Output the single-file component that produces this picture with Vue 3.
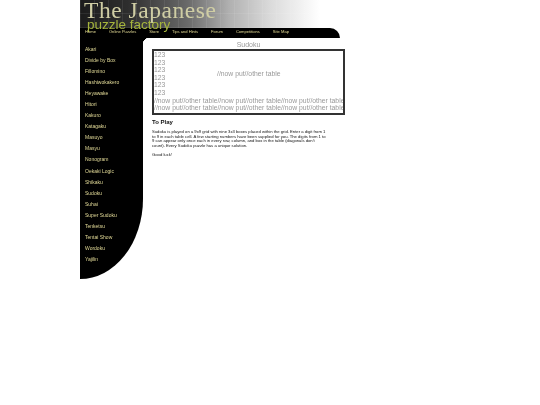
<script setup>
const nav = ['Home', 'Online Puzzles', 'Store', 'Tips and Hints', 'Forum', 'Competitions', 'Site Map']
const puzzles = ['Akari', 'Divide by Box', 'Fillomino', 'Hashiwokakero', 'Heyawake', 'Hitori', 'Kakuro', 'Katagaku', 'Masuyo', 'Masyu', 'Nonogram', 'Oekaki Logic', 'Shikaku', 'Sudoku', 'Suhai', 'Super Sudoku', 'Tenketsu', 'Tentai Show', 'Wordoku', 'Yajilin']
const repeated = '//now put//other table'.repeat(3)
</script>

<template>
  <div class="page">
    <header class="banner">
      <div class="title">The Japanese</div>
      <div class="subtitle">puzzle factory</div>
    </header>
    <nav class="nav">
      <a v-for="n in nav" :key="n" class="nav-item">{{ n }}</a>
    </nav>
    <div class="body">
      <aside class="side">
        <a v-for="p in puzzles" :key="p" class="side-item">{{ p }}</a>
      </aside>
      <main class="main">
        <div class="corner"></div>
        <h1 class="heading">Sudoku</h1>
        <div class="board">
          <div class="top">
            <div class="nums">
              <div v-for="i in 6" :key="i">123</div>
            </div>
            <div class="centre">//now put//other table</div>
          </div>
          <div class="line">{{ repeated }}</div>
          <div class="line">{{ repeated }}</div>
        </div>
        <h2 class="play">To Play</h2>
        <p class="copy">Sudoku is played on a 9x9 grid with nine 3x3 boxes placed within the grid. Enter a digit from 1 to 9 in each table cell. A few starting numbers have been supplied for you. The digits from 1 to 9 can appear only once each in every row, column, and box in the table (diagonals don't count). Every Sudoku puzzle has a unique solution.</p>
        <p class="copy luck">Good luck!</p>
      </main>
    </div>
  </div>
</template>

<style>
html, body { margin: 0; background: #fff; }
</style>

<style scoped>
.page {
  width: 265px;
  margin-left: 80px;
  font-family: "Liberation Sans", Arial, sans-serif;
  filter: blur(0.3px);
}
.banner {
  height: 28px;
  width: 240px;
  background-color: #fff;
  background-image:
    repeating-linear-gradient(90deg, rgba(255,255,255,.07) 0 1px, transparent 1px 14px),
    repeating-linear-gradient(0deg, rgba(255,255,255,.07) 0 1px, transparent 1px 14px),
    linear-gradient(90deg, #1c1c1c 0, #2e2e2e 20%, #6a6a6a 45%, #b0b0b0 62%, #dcdcdc 80%, #fff 100%);
}
.title {
  font-family: "Liberation Serif", serif;
  font-size: 23.5px;
  line-height: 21px;
  letter-spacing: 0.55px;
  color: #cfcda4;
  padding-left: 4px;
}
.subtitle {
  position: relative;
  font-size: 13.5px;
  line-height: 13px;
  color: #a6b53d;
  padding-left: 7px;
  margin-top: -3px;
}
.nav {
  width: 260px;
  height: 10px;
  background: #000;
  border-top-right-radius: 10px 10px;
  display: flex;
  box-sizing: border-box;
  padding-left: 5px;
  gap: 13px;
}
.nav-item {
  position: relative;
  font-size: 4.1px;
  line-height: 7px;
  color: #e4db96;
  white-space: nowrap;
}
.body { display: flex; align-items: flex-start; }
.side {
  width: 63px;
  height: 241px;
  background: #000;
  border-bottom-right-radius: 63px 80px;
  box-sizing: border-box;
  padding: 5.5px 0 0 5px;
  display: flex;
  flex-direction: column;
}
.side-item {
  font-size: 5px;
  height: 11.1px;
  line-height: 11.1px;
  color: #e0d896;
  white-space: nowrap;
}
.main {
  position: relative;
  width: 202px;
  box-sizing: border-box;
  padding: 3px 0 0 9px;
}
.corner {
  position: absolute;
  left: 0;
  top: 0;
  width: 6px;
  height: 6px;
  background: radial-gradient(circle at 100% 100%, #fff 0 6px, #000 6.3px);
}
.heading {
  margin: 0;
  font-size: 7px;
  line-height: 8px;
  font-weight: normal;
  color: #999;
  text-align: center;
  width: 193px;
}
.board {
  width: 193px;
  height: 66px;
  box-sizing: border-box;
  border: 2px solid #333;
  overflow: hidden;
  color: #999;
  font-size: 6.8px;
  line-height: 7.6px;
}
.top { display: flex; align-items: center; }
.nums { width: 63px; }
.centre { white-space: nowrap; }
.line { white-space: nowrap; }
.play {
  margin: 4px 0 0;
  font-size: 6px;
  line-height: 7px;
  font-weight: bold;
  color: #111;
}
.copy {
  margin: 4px 0 0;
  width: 175px;
  font-size: 4.2px;
  line-height: 4.6px;
  color: #111;
}
.luck { margin-top: 4.4px; }
</style>
